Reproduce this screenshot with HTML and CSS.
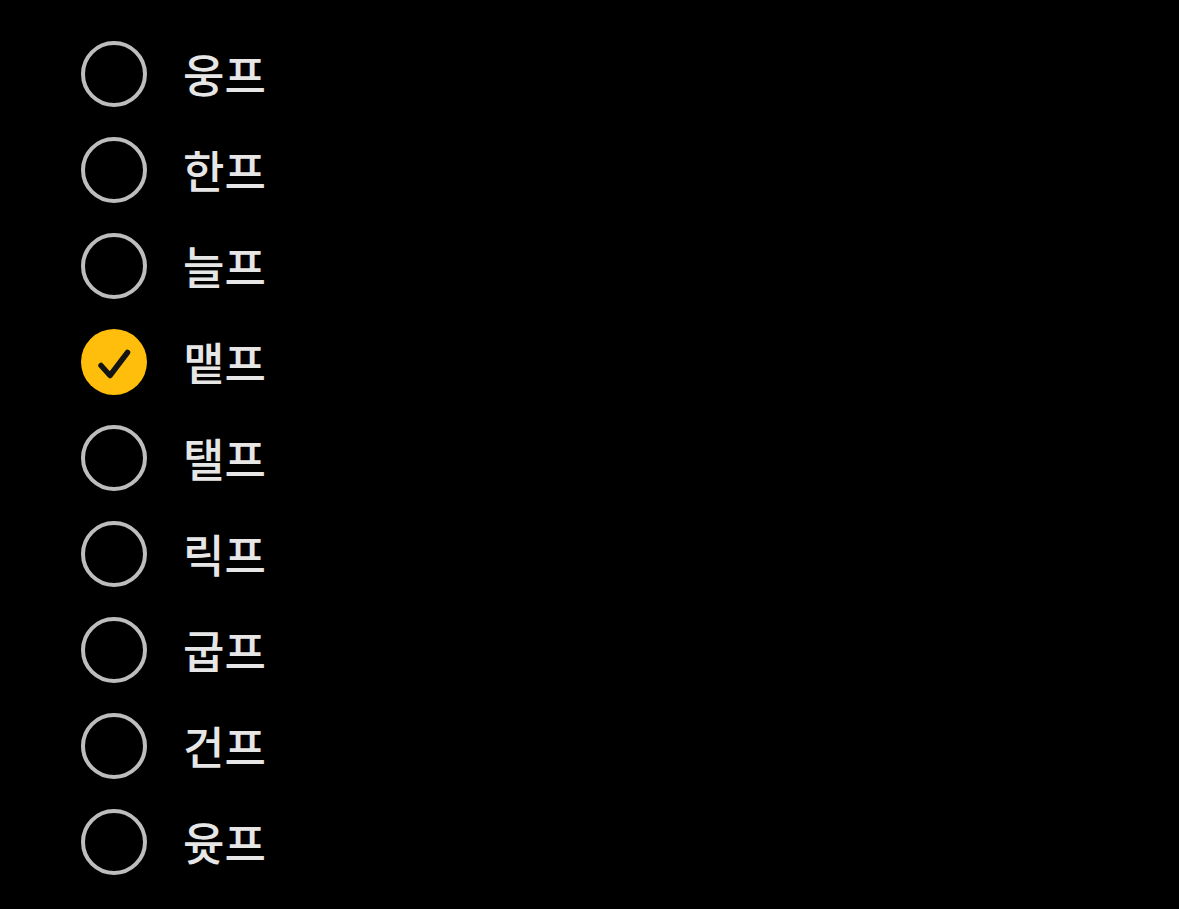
FILE: index.html
```html
<!DOCTYPE html>
<html lang="ko">
<head>
<meta charset="utf-8">
<link rel="stylesheet" href="styles.css">
</head>
<body>
<ul class="list">
  <li class="row"><span class="radio"></span><span class="label">웅프</span></li>
  <li class="row"><span class="radio"></span><span class="label">한프</span></li>
  <li class="row"><span class="radio"></span><span class="label">늘프</span></li>
  <li class="row"><span class="radio checked"><svg viewBox="0 0 66 66" width="66" height="66"><path d="M20 36.5 L29 46.5 L46.5 23.5" fill="none" stroke="#141414" stroke-width="5.5" stroke-linecap="round" stroke-linejoin="round"/></svg></span><span class="label">맽프</span></li>
  <li class="row"><span class="radio"></span><span class="label">탤프</span></li>
  <li class="row"><span class="radio"></span><span class="label">릭프</span></li>
  <li class="row"><span class="radio"></span><span class="label">굽프</span></li>
  <li class="row"><span class="radio"></span><span class="label">건프</span></li>
  <li class="row"><span class="radio"></span><span class="label">윳프</span></li>
</ul>
</body>
</html>
```

FILE: styles.css
```css
html, body {
  margin: 0;
  padding: 0;
  background: #000;
  height: 100%;
}
.list {
  list-style: none;
  margin: 0;
  padding: 26px 0 0 81px;
}
.row {
  height: 96px;
  display: flex;
  align-items: center;
  gap: 36px;
}
.radio {
  width: 66px;
  height: 66px;
  box-sizing: border-box;
  border: 4px solid #bdbdbd;
  border-radius: 50%;
  flex: none;
  display: flex;
}
.radio.checked {
  border: none;
  background: #ffbe0b;
}
.label {
  font-family: "Noto Sans CJK KR", "Noto Sans", sans-serif;
  font-weight: 500;
  font-size: 45px;
  color: #e6e6e6;
  line-height: 1;
  margin-top: -2px;
}
```
